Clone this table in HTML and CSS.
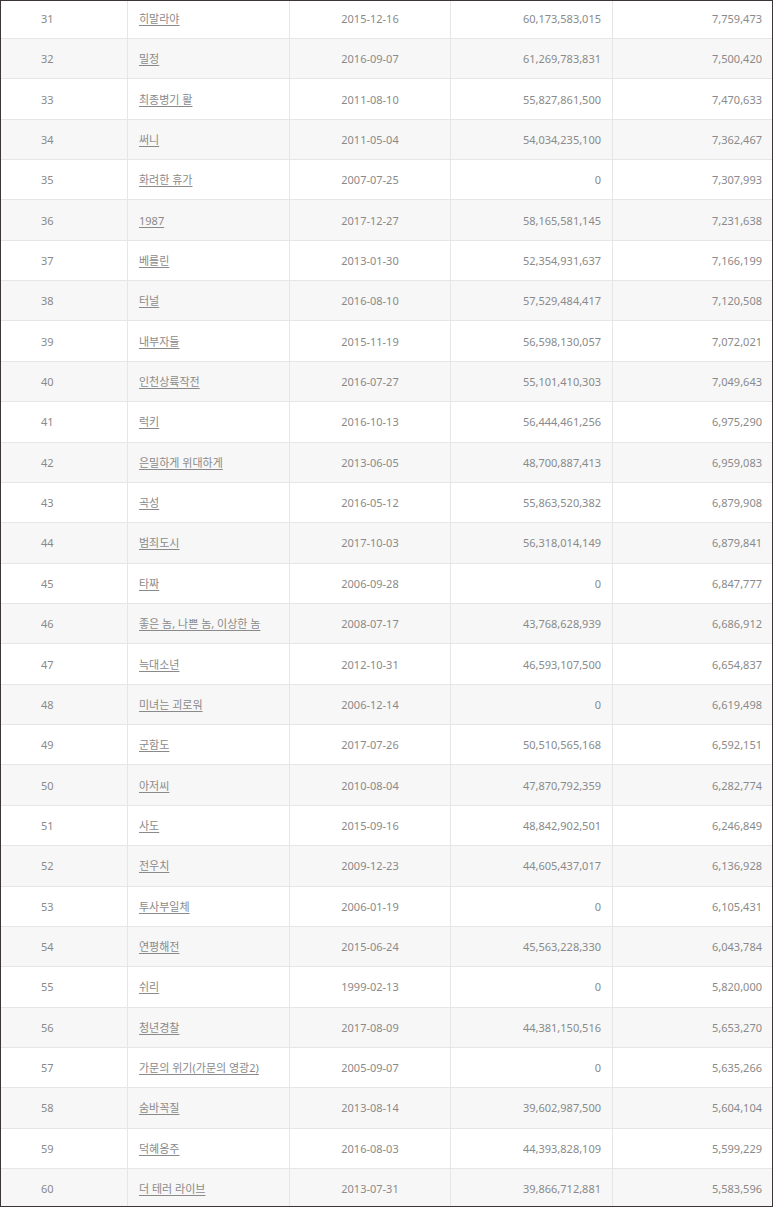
FILE: index.html
```html
<!DOCTYPE html>
<html lang="ko">
<head>
<meta charset="utf-8">
<title>역대 관객수 순위</title>
<link rel="stylesheet" href="styles.css">
</head>
<body>
<div class="frame">
  <div class="list">
    <div class="row"><div class="c rank">31</div><div class="c title"><a href="#">히말라야</a></div><div class="c date">2015-12-16</div><div class="c num">60,173,583,015</div><div class="c num">7,759,473</div></div>
    <div class="row alt"><div class="c rank">32</div><div class="c title"><a href="#">밀정</a></div><div class="c date">2016-09-07</div><div class="c num">61,269,783,831</div><div class="c num">7,500,420</div></div>
    <div class="row"><div class="c rank">33</div><div class="c title"><a href="#">최종병기 활</a></div><div class="c date">2011-08-10</div><div class="c num">55,827,861,500</div><div class="c num">7,470,633</div></div>
    <div class="row alt"><div class="c rank">34</div><div class="c title"><a href="#">써니</a></div><div class="c date">2011-05-04</div><div class="c num">54,034,235,100</div><div class="c num">7,362,467</div></div>
    <div class="row"><div class="c rank">35</div><div class="c title"><a href="#">화려한 휴가</a></div><div class="c date">2007-07-25</div><div class="c num">0</div><div class="c num">7,307,993</div></div>
    <div class="row alt"><div class="c rank">36</div><div class="c title"><a href="#">1987</a></div><div class="c date">2017-12-27</div><div class="c num">58,165,581,145</div><div class="c num">7,231,638</div></div>
    <div class="row"><div class="c rank">37</div><div class="c title"><a href="#">베를린</a></div><div class="c date">2013-01-30</div><div class="c num">52,354,931,637</div><div class="c num">7,166,199</div></div>
    <div class="row alt"><div class="c rank">38</div><div class="c title"><a href="#">터널</a></div><div class="c date">2016-08-10</div><div class="c num">57,529,484,417</div><div class="c num">7,120,508</div></div>
    <div class="row"><div class="c rank">39</div><div class="c title"><a href="#">내부자들</a></div><div class="c date">2015-11-19</div><div class="c num">56,598,130,057</div><div class="c num">7,072,021</div></div>
    <div class="row alt"><div class="c rank">40</div><div class="c title"><a href="#">인천상륙작전</a></div><div class="c date">2016-07-27</div><div class="c num">55,101,410,303</div><div class="c num">7,049,643</div></div>
    <div class="row"><div class="c rank">41</div><div class="c title"><a href="#">럭키</a></div><div class="c date">2016-10-13</div><div class="c num">56,444,461,256</div><div class="c num">6,975,290</div></div>
    <div class="row alt"><div class="c rank">42</div><div class="c title"><a href="#">은밀하게 위대하게</a></div><div class="c date">2013-06-05</div><div class="c num">48,700,887,413</div><div class="c num">6,959,083</div></div>
    <div class="row"><div class="c rank">43</div><div class="c title"><a href="#">곡성</a></div><div class="c date">2016-05-12</div><div class="c num">55,863,520,382</div><div class="c num">6,879,908</div></div>
    <div class="row alt"><div class="c rank">44</div><div class="c title"><a href="#">범죄도시</a></div><div class="c date">2017-10-03</div><div class="c num">56,318,014,149</div><div class="c num">6,879,841</div></div>
    <div class="row"><div class="c rank">45</div><div class="c title"><a href="#">타짜</a></div><div class="c date">2006-09-28</div><div class="c num">0</div><div class="c num">6,847,777</div></div>
    <div class="row alt"><div class="c rank">46</div><div class="c title"><a href="#">좋은 놈, 나쁜 놈, 이상한 놈</a></div><div class="c date">2008-07-17</div><div class="c num">43,768,628,939</div><div class="c num">6,686,912</div></div>
    <div class="row"><div class="c rank">47</div><div class="c title"><a href="#">늑대소년</a></div><div class="c date">2012-10-31</div><div class="c num">46,593,107,500</div><div class="c num">6,654,837</div></div>
    <div class="row alt"><div class="c rank">48</div><div class="c title"><a href="#">미녀는 괴로워</a></div><div class="c date">2006-12-14</div><div class="c num">0</div><div class="c num">6,619,498</div></div>
    <div class="row"><div class="c rank">49</div><div class="c title"><a href="#">군함도</a></div><div class="c date">2017-07-26</div><div class="c num">50,510,565,168</div><div class="c num">6,592,151</div></div>
    <div class="row alt"><div class="c rank">50</div><div class="c title"><a href="#">아저씨</a></div><div class="c date">2010-08-04</div><div class="c num">47,870,792,359</div><div class="c num">6,282,774</div></div>
    <div class="row"><div class="c rank">51</div><div class="c title"><a href="#">사도</a></div><div class="c date">2015-09-16</div><div class="c num">48,842,902,501</div><div class="c num">6,246,849</div></div>
    <div class="row alt"><div class="c rank">52</div><div class="c title"><a href="#">전우치</a></div><div class="c date">2009-12-23</div><div class="c num">44,605,437,017</div><div class="c num">6,136,928</div></div>
    <div class="row"><div class="c rank">53</div><div class="c title"><a href="#">투사부일체</a></div><div class="c date">2006-01-19</div><div class="c num">0</div><div class="c num">6,105,431</div></div>
    <div class="row alt"><div class="c rank">54</div><div class="c title"><a href="#">연평해전</a></div><div class="c date">2015-06-24</div><div class="c num">45,563,228,330</div><div class="c num">6,043,784</div></div>
    <div class="row"><div class="c rank">55</div><div class="c title"><a href="#">쉬리</a></div><div class="c date">1999-02-13</div><div class="c num">0</div><div class="c num">5,820,000</div></div>
    <div class="row alt"><div class="c rank">56</div><div class="c title"><a href="#">청년경찰</a></div><div class="c date">2017-08-09</div><div class="c num">44,381,150,516</div><div class="c num">5,653,270</div></div>
    <div class="row"><div class="c rank">57</div><div class="c title"><a href="#">가문의 위기(가문의 영광2)</a></div><div class="c date">2005-09-07</div><div class="c num">0</div><div class="c num">5,635,266</div></div>
    <div class="row alt"><div class="c rank">58</div><div class="c title"><a href="#">숨바꼭질</a></div><div class="c date">2013-08-14</div><div class="c num">39,602,987,500</div><div class="c num">5,604,104</div></div>
    <div class="row"><div class="c rank">59</div><div class="c title"><a href="#">덕혜옹주</a></div><div class="c date">2016-08-03</div><div class="c num">44,393,828,109</div><div class="c num">5,599,229</div></div>
    <div class="row alt"><div class="c rank">60</div><div class="c title"><a href="#">더 테러 라이브</a></div><div class="c date">2013-07-31</div><div class="c num">39,866,712,881</div><div class="c num">5,583,596</div></div>
  </div>
</div>
</body>
</html>
```
FILE: styles.css
```css
html, body {
  margin: 0;
  padding: 0;
  background: #ffffff;
}
.frame {
  box-sizing: border-box;
  width: 773px;
  height: 1207px;
  border: 1px solid #3b3535;
  overflow: hidden;
  font-family: "Noto Sans", "Noto Sans CJK KR", sans-serif;
  font-size: 11px;
  font-weight: 400;
  color: #8a8a8a;
}
.list {
  margin-top: -2.4px;
}
.row {
  display: grid;
  grid-template-columns: 127px 162px 161px 162px 159px;
  height: 40.36px;
  box-sizing: border-box;
  border-bottom: 1px solid #e6e6e6;
  background: #ffffff;
}
.row.alt {
  background: #f7f7f7;
}
.c {
  display: flex;
  align-items: center;
  box-sizing: border-box;
  border-right: 1px solid #e6e6e6;
  white-space: nowrap;
  line-height: 1;
}
.c:last-child {
  border-right: none;
}
.rank {
  padding-left: 40px;
}
.title {
  padding-left: 11px;
}
.title a {
  color: #8a8a8a;
  text-decoration: underline;
  text-underline-offset: 2px;
}
.date {
  justify-content: center;
}
.num {
  justify-content: flex-end;
  padding-right: 10px;
}
.c:nth-child(4) {
  padding-right: 11px;
}
```
